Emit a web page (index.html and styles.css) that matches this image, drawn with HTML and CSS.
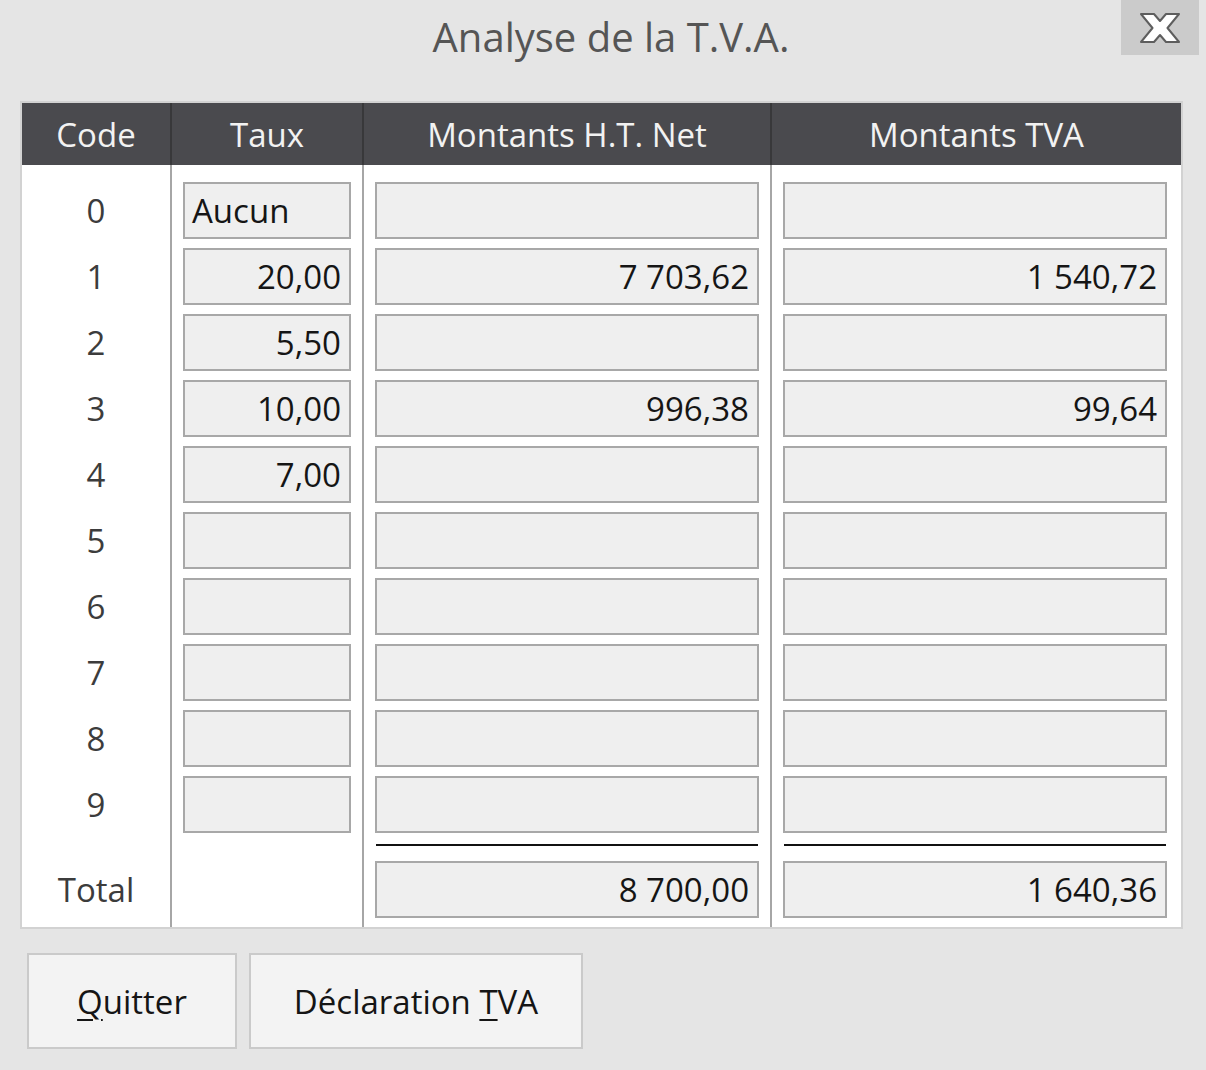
FILE: index.html
```html
<!DOCTYPE html>
<html lang="fr">
<head>
<meta charset="utf-8">
<title>Analyse de la T.V.A.</title>
<link rel="stylesheet" href="styles.css">
</head>
<body>
<div class="dialog">
  <div class="titlebar">
    <div class="title">Analyse de la T.V.A.</div>
    <div class="close">
      <svg width="40" height="30" viewBox="-1 -1 40 30">
        <polygon points="0,0 13,0 19,7 25,0 38,0 26.5,14 38,28 25,28 19,21 13,28 0,28 11.5,14" fill="#ffffff" stroke="#5e5e5e" stroke-width="2" stroke-linejoin="round"/>
      </svg>
    </div>
  </div>

  <div class="panel">
    <div class="head">
      <div class="hcell">Code</div>
      <div class="hcell">Taux</div>
      <div class="hcell">Montants H.T. Net</div>
      <div class="hcell">Montants TVA</div>
    </div>
    <div class="body">
      <div class="col">
        <div class="code">0</div>
        <div class="code">1</div>
        <div class="code">2</div>
        <div class="code">3</div>
        <div class="code">4</div>
        <div class="code">5</div>
        <div class="code">6</div>
        <div class="code">7</div>
        <div class="code">8</div>
        <div class="code">9</div>
        <div class="sep"></div>
        <div class="code">Total</div>
      </div>
      <div class="col taux">
        <div class="field left">Aucun</div>
        <div class="field">20,00</div>
        <div class="field">5,50</div>
        <div class="field">10,00</div>
        <div class="field">7,00</div>
        <div class="field"></div>
        <div class="field"></div>
        <div class="field"></div>
        <div class="field"></div>
        <div class="field"></div>
      </div>
      <div class="col amt">
        <div class="field"></div>
        <div class="field">7&nbsp;703,62</div>
        <div class="field"></div>
        <div class="field">996,38</div>
        <div class="field"></div>
        <div class="field"></div>
        <div class="field"></div>
        <div class="field"></div>
        <div class="field"></div>
        <div class="field"></div>
        <div class="sep"><div class="line"></div></div>
        <div class="field">8&nbsp;700,00</div>
      </div>
      <div class="col amt">
        <div class="field"></div>
        <div class="field">1&nbsp;540,72</div>
        <div class="field"></div>
        <div class="field">99,64</div>
        <div class="field"></div>
        <div class="field"></div>
        <div class="field"></div>
        <div class="field"></div>
        <div class="field"></div>
        <div class="field"></div>
        <div class="sep"><div class="line"></div></div>
        <div class="field">1&nbsp;640,36</div>
      </div>
    </div>
  </div>

  <div class="buttons">
    <button class="btn quit"><u>Q</u>uitter</button>
    <button class="btn decl">Déclaration <u>T</u>VA</button>
  </div>
</div>
</body>
</html>
```

FILE: styles.css
```css
html, body {
  margin: 0;
  padding: 0;
}

body {
  background: #e5e5e5;
  font-family: "Open Sans", "Noto Sans", sans-serif;
  width: 1206px;
  height: 1070px;
  overflow: hidden;
}

.dialog {
  width: 1206px;
}

.titlebar {
  display: grid;
  grid-template-columns: 1fr auto 1fr;
  height: 101px;
}

.title {
  grid-column: 2;
  font-size: 40px;
  line-height: 1;
  color: #555555;
  padding-top: 17px;
  padding-left: 16px;
  white-space: nowrap;
}

.close {
  grid-column: 3;
  justify-self: end;
  align-self: start;
  width: 78px;
  height: 55px;
  margin-right: 7px;
  background: #cbcbcb;
  display: flex;
  align-items: center;
  justify-content: center;
}

.panel {
  margin-left: 20px;
  width: 1159px;
  border: 2px solid #d2d2d2;
  background: #ffffff;
}

.head,
.body {
  display: grid;
  grid-template-columns: 148px 192px 408px 411px;
}

.head {
  height: 62px;
  background: #4a4a4e;
  color: #f2f2f2;
}

.hcell {
  display: flex;
  align-items: center;
  justify-content: center;
  font-size: 33px;
  white-space: nowrap;
}

.hcell + .hcell {
  border-left: 2px solid #38383a;
}

.col {
  display: flex;
  flex-direction: column;
  gap: 9px;
  padding-top: 17px;
  padding-bottom: 9px;
}

.col + .col {
  border-left: 2px solid #a6a6a6;
}

.code {
  height: 57px;
  display: flex;
  align-items: center;
  justify-content: center;
  font-size: 33px;
  color: #3c3c3c;
}

.field {
  box-sizing: border-box;
  height: 57px;
  margin-left: 11px;
  border: 2px solid #a8a8a8;
  background: #efefef;
  display: flex;
  align-items: center;
  justify-content: flex-end;
  padding: 0 8px;
  font-size: 33px;
  color: #151515;
  white-space: nowrap;
}

.field.left {
  justify-content: flex-start;
  padding-left: 7px;
}

.taux .field {
  width: 168px;
}

.amt .field {
  width: 384px;
}

.sep {
  box-sizing: border-box;
  height: 10px;
  padding-top: 2px;
}

.line {
  height: 2px;
  width: 382px;
  margin-left: 12px;
  background: #111111;
}

.buttons {
  display: flex;
  gap: 12px;
  margin: 24px 0 0 27px;
}

.btn {
  box-sizing: border-box;
  height: 96px;
  border: 2px solid #cacaca;
  background: #f3f3f3;
  font-family: "Open Sans", "Noto Sans", sans-serif;
  font-size: 33px;
  color: #151515;
  padding: 0;
}

.btn u {
  text-decoration-thickness: 2px;
  text-underline-offset: 5px;
}

.quit {
  width: 210px;
}

.decl {
  width: 334px;
}
```
